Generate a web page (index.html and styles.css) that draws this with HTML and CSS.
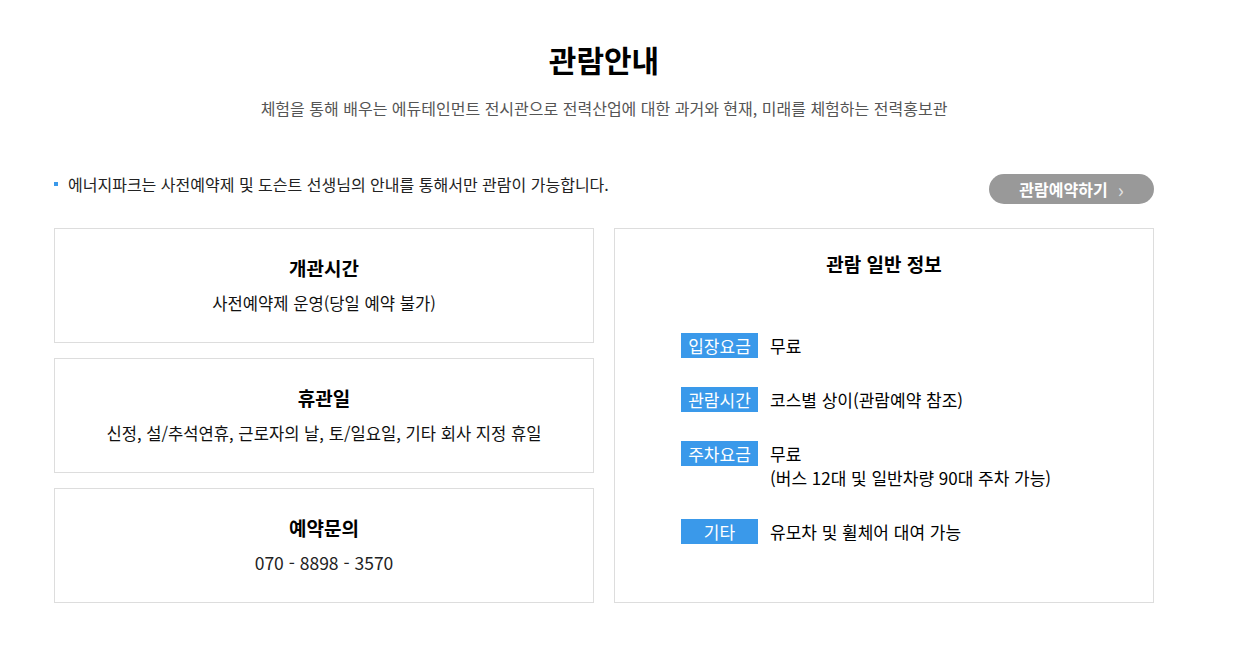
FILE: index.html
```html
<!DOCTYPE html>
<html lang="ko">
<head>
<meta charset="utf-8">
<title>관람안내</title>
<link rel="stylesheet" href="styles.css">
</head>
<body>
<div class="wrap">
  <header class="head">
    <h1 class="title">관람안내</h1>
    <p class="sub">체험을 통해 배우는 에듀테인먼트 전시관으로 전력산업에 대한 과거와 현재, 미래를 체험하는 전력홍보관</p>
  </header>
  <div class="notice-bar">
    <p class="notice">에너지파크는 사전예약제 및 도슨트 선생님의 안내를 통해서만 관람이 가능합니다.</p>
    <a class="btn" href="#">관람예약하기 <span class="chev">&#8250;</span></a>
  </div>
  <div class="grid">
    <div class="col">
      <div class="card">
        <h2 class="card-title">개관시간</h2>
        <p class="card-text">사전예약제 운영(당일 예약 불가)</p>
      </div>
      <div class="card">
        <h2 class="card-title">휴관일</h2>
        <p class="card-text">신정, 설/추석연휴, 근로자의 날, 토/일요일, 기타 회사 지정 휴일</p>
      </div>
      <div class="card">
        <h2 class="card-title">예약문의</h2>
        <p class="card-text phone">070 - 8898 - 3570</p>
      </div>
    </div>
    <div class="info">
      <h2 class="card-title info-title">관람 일반 정보</h2>
      <dl class="rows">
        <div class="row"><dt class="lbl">입장요금</dt><dd class="val">무료</dd></div>
        <div class="row"><dt class="lbl">관람시간</dt><dd class="val">코스별 상이(관람예약 참조)</dd></div>
        <div class="row"><dt class="lbl">주차요금</dt><dd class="val">무료<br>(버스 12대 및 일반차량 90대 주차 가능)</dd></div>
        <div class="row"><dt class="lbl">기타</dt><dd class="val">유모차 및 휠체어 대여 가능</dd></div>
      </dl>
    </div>
  </div>
</div>
</body>
</html>
```
FILE: styles.css
```css
* { box-sizing: border-box; }
html, body { margin: 0; padding: 0; background: #fff; }
body {
  font-family: "Noto Sans CJK KR", "Noto Sans", sans-serif;
  color: #111;
}
.wrap {
  width: 1100px;
  margin-left: 54px;
}
.head {
  text-align: center;
  padding-top: 38px;
}
.title {
  margin: 0;
  font-size: 30px;
  line-height: 42px;
  font-weight: 700;
  color: #000;
}
.sub {
  margin: 17px 0 0;
  font-size: 16px;
  line-height: 22px;
  color: #555;
}
.notice-bar {
  display: flex;
  justify-content: space-between;
  align-items: flex-start;
  margin-top: 55px;
}
.notice {
  margin: 0;
  font-size: 16px;
  line-height: 22px;
  color: #222;
  padding-left: 14px;
  position: relative;
  margin-top: -1px;
}
.notice::before {
  content: "";
  position: absolute;
  left: 0;
  top: 9px;
  width: 4px;
  height: 4px;
  background: #3a99ea;
}
.btn {
  display: flex;
  align-items: center;
  justify-content: center;
  gap: 10px;
  width: 165px;
  height: 30px;
  border-radius: 15px;
  background: #999;
  color: #fff;
  font-size: 16px;
  font-weight: 700;
  text-decoration: none;
}
.chev {
  font-weight: 400;
  color: #e4e4e4;
  font-size: 20px;
  line-height: 20px;
  margin-top: 1px;
}
.grid {
  display: grid;
  grid-template-columns: 540px 540px;
  gap: 20px;
  margin-top: 24px;
}
.col {
  display: flex;
  flex-direction: column;
  gap: 15px;
}
.card {
  height: 115px;
  border: 1px solid #ddd;
  display: flex;
  flex-direction: column;
  align-items: center;
  justify-content: center;
  gap: 11px;
}
.card-title {
  margin: 0;
  font-size: 19px;
  line-height: 24px;
  font-weight: 700;
  color: #000;
}
.card-text {
  margin: 0;
  font-size: 16.6px;
  line-height: 24px;
  color: #111;
}
.phone {
  font-size: 17.5px;
  color: #222;
}
.info {
  border: 1px solid #ddd;
  padding: 23px 0 0 66px;
}
.info-title {
  text-align: center;
  margin-left: -66px;
}
.rows {
  margin: 57px 0 0;
  display: flex;
  flex-direction: column;
  gap: 29px;
}
.row {
  display: flex;
  align-items: flex-start;
  gap: 12px;
}
.lbl {
  width: 77px;
  height: 25px;
  background: #3a99ea;
  color: #fff;
  font-size: 17px;
  line-height: 25px;
  text-align: center;
  flex: none;
}
.val {
  margin: 0;
  padding-top: 1px;
  font-size: 17px;
  line-height: 24px;
  color: #000;
}
```
